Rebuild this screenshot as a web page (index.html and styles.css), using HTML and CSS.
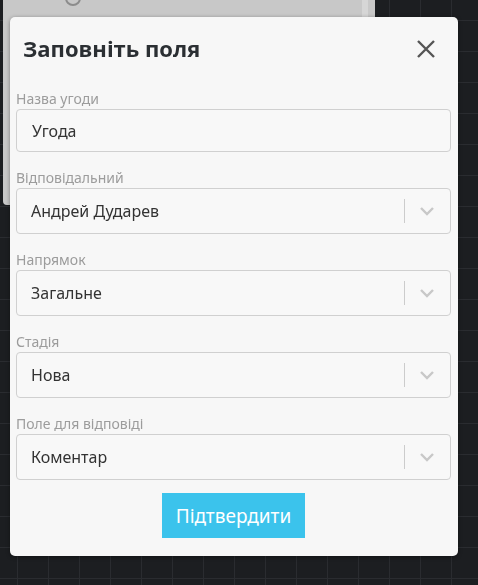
FILE: index.html
```html
<!DOCTYPE html>
<html lang="uk">
<head>
<meta charset="UTF-8" />
<meta name="viewport" content="width=device-width, initial-scale=1" />
<title>Заповніть поля</title>
<link rel="stylesheet" href="styles.css">
</head>
<body>

<div class="board">
  <div class="board-dot"></div>
  <div class="board-scroll"></div>
</div>

<div class="modal">
  <div class="modal-head">
    <h2>Заповніть поля</h2>
    <button class="close" title="Закрити">
      <svg width="20" height="20" viewBox="0 0 20 20"><path d="M2 2 L18 18 M18 2 L2 18" stroke="#555" stroke-width="2.4" fill="none"/></svg>
    </button>
  </div>

  <div class="field">
    <label>Назва угоди</label>
    <div class="input">Угода</div>
  </div>

  <div class="field">
    <label>Відповідальний</label>
    <div class="select">
      <span>Андрей Дударев</span>
      <i class="sep"></i>
      <svg class="chev" width="16" height="10" viewBox="0 0 16 10"><path d="M2 2 L8 8 L14 2" stroke="#c8c8c8" stroke-width="2.4" fill="none"/></svg>
    </div>
  </div>

  <div class="field">
    <label>Напрямок</label>
    <div class="select">
      <span>Загальне</span>
      <i class="sep"></i>
      <svg class="chev" width="16" height="10" viewBox="0 0 16 10"><path d="M2 2 L8 8 L14 2" stroke="#c8c8c8" stroke-width="2.4" fill="none"/></svg>
    </div>
  </div>

  <div class="field">
    <label>Стадія</label>
    <div class="select">
      <span>Нова</span>
      <i class="sep"></i>
      <svg class="chev" width="16" height="10" viewBox="0 0 16 10"><path d="M2 2 L8 8 L14 2" stroke="#c8c8c8" stroke-width="2.4" fill="none"/></svg>
    </div>
  </div>

  <div class="field">
    <label>Поле для відповіді</label>
    <div class="select">
      <span>Коментар</span>
      <i class="sep"></i>
      <svg class="chev" width="16" height="10" viewBox="0 0 16 10"><path d="M2 2 L8 8 L14 2" stroke="#c8c8c8" stroke-width="2.4" fill="none"/></svg>
    </div>
  </div>

  <div class="modal-buttons">
    <button class="confirm">Підтвердити</button>
  </div>
</div>

</body>
</html>
```

FILE: styles.css
```css
body{
  margin: 0;
  height: 585px;
  overflow: hidden;
  font-family: "Noto Sans", "Open Sans", sans-serif;
  background-color: #1c1e21;
  background-image:
    linear-gradient(to right, #2a2c30 1px, transparent 1px),
    linear-gradient(to bottom, #2a2c30 1px, transparent 1px);
  background-size: 31px 31px;
  background-position: 17px 20px;
}
.board{
  width: 372px;
  height: 205px;
  margin-left: 3px;
  background-color: #c8c8c8;
  border-bottom-left-radius: 4px;
  display: flex;
  justify-content: space-between;
  align-items: flex-start;
}
.board-dot{
  width: 12px;
  height: 12px;
  margin: -10px 0 0 62px;
  border: 2px solid #8c8c8c;
  border-radius: 50%;
}
.board-scroll{
  width: 6px;
  height: 100%;
  margin-right: 7px;
  background-color: #d6d6d6;
}
.modal{
  position: fixed;
  top: 17px;
  left: 10px;
  width: 448px;
  height: 539px;
  box-sizing: border-box;
  padding: 0 7px 0 6px;
  background: #f7f7f7;
  border-radius: 5px;
  box-shadow: 0 1px 4px rgba(0,0,0,0.4);
}
.modal-head{
  height: 56px;
  display: flex;
  justify-content: space-between;
  align-items: flex-start;
  padding: 0 15px 0 7px;
  box-sizing: border-box;
}
.modal-head h2{
  margin: 18px 0 0 0;
  font-family: "Open Sans", sans-serif;
  font-size: 22px;
  line-height: 26px;
  font-weight: 700;
  color: #2b2f33;
}
.close{
  border: none;
  background: none;
  padding: 0;
  margin-top: 22px;
  width: 20px;
  height: 20px;
  cursor: pointer;
}
.close svg{
  display: block;
}
.field{
  margin-top: 17px;
}
.field label{
  display: block;
  font-size: 14px;
  line-height: 18px;
  color: #9c9c9c;
  margin-bottom: 1px;
}
.input, .select{
  box-sizing: border-box;
  border: 1px solid #d0d0d0;
  border-radius: 4px;
  background: #f8f8f8;
  font-size: 16px;
  color: #333;
  display: flex;
  align-items: center;
}
.input{
  height: 43px;
  padding-left: 15px;
}
.select{
  height: 46px;
  padding-left: 14px;
}
.select span{
  flex: 1;
}
.sep{
  width: 1px;
  height: 24px;
  background: #cccccc;
}
.chev{
  margin: 0 15px 0 14px;
}
.modal-buttons{
  display: flex;
  justify-content: center;
  margin-top: 13px;
}
.confirm{
  width: 143px;
  height: 45px;
  border: none;
  background: #3bc3ec;
  color: white;
  font-family: "Noto Sans", sans-serif;
  font-size: 19px;
  cursor: pointer;
}
```
